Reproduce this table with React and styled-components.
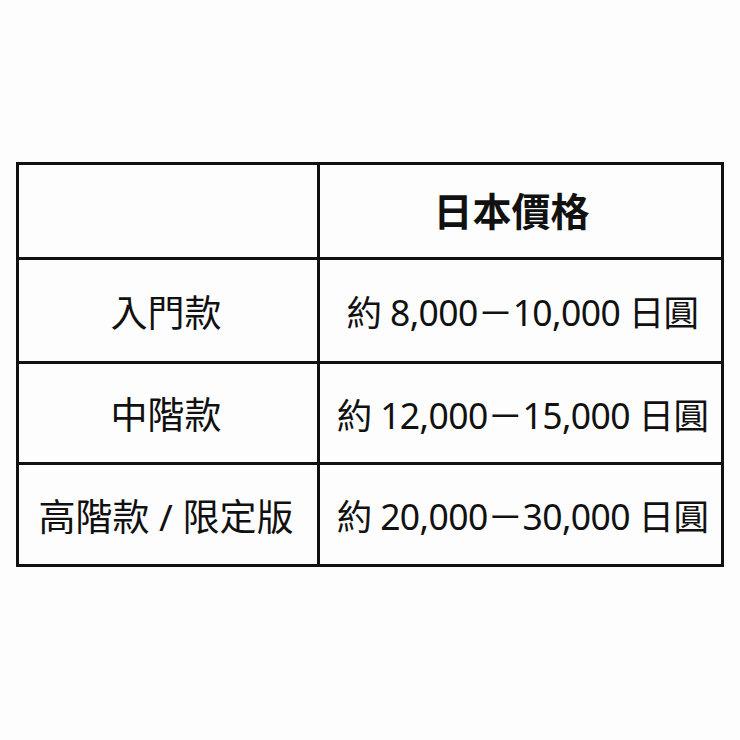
import React from 'react'
import styled, { createGlobalStyle } from 'styled-components'

const GlobalStyle = createGlobalStyle`
  html, body {
    margin: 0;
    padding: 0;
    background: #fdfdfd;
  }
  body {
    font-family: "Noto Sans", "Noto Sans CJK TC", sans-serif;
    color: #111;
  }
`

const rows = [
  { tier: '入門款', price: '約 8,000－10,000 日圓', height: 104 },
  { tier: '中階款', price: '約 12,000－15,000 日圓', height: 101 },
  { tier: '高階款 / 限定版', price: '約 20,000－30,000 日圓', height: 102 },
]

function App() {
  return (
    <Page>
      <GlobalStyle />
      <Table>
        <colgroup>
          <col style={{ width: 301 }} />
          <col style={{ width: 404 }} />
        </colgroup>
        <thead>
          <Row $h={95}>
            <HeadCell />
            <HeadCell>日本價格</HeadCell>
          </Row>
        </thead>
        <tbody>
          {rows.map((r) => (
            <Row key={r.tier} $h={r.height}>
              <TierCell>{r.tier}</TierCell>
              <PriceCell>{r.price}</PriceCell>
            </Row>
          ))}
        </tbody>
      </Table>
    </Page>
  )
}

const Page = styled.div`
  width: 740px;
  height: 740px;
  padding: 162px 0 0 16px;
  box-sizing: border-box;
`

const Table = styled.table`
  border-collapse: collapse;
  table-layout: fixed;
  width: 707px;
  border: 3px solid #111;
`

const Row = styled.tr`
  height: ${(p) => p.$h}px;
`

const HeadCell = styled.th`
  border: 3px solid #111;
  padding: 0 18px 4px 0;
  font-size: 39px;
  font-weight: 700;
  text-align: center;
  vertical-align: middle;
  font-family: "Noto Sans CJK TC", sans-serif;
`

const Cell = styled.td`
  border: 3px solid #111;
  padding: 0;
  text-align: center;
  vertical-align: middle;
  white-space: nowrap;
  font-weight: 400;
`

const TierCell = styled(Cell)`
  font-size: 37px;
  padding-right: 4px;
`

const PriceCell = styled(Cell)`
  font-size: 35.5px;
  letter-spacing: -0.6px;
  padding-left: 4px;
`

export default App
